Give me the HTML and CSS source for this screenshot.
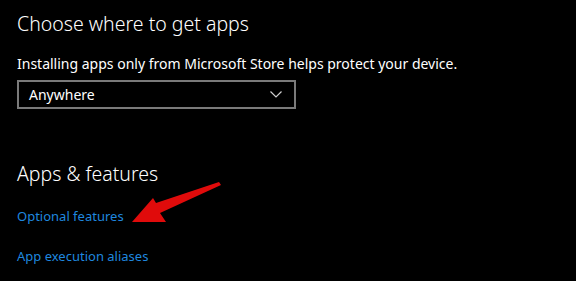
FILE: index.html
```html
<!DOCTYPE html>
<html lang="en">

<head>
    <meta charset="UTF-8">
    <title>Apps & features</title>
    <link rel="stylesheet" href="styles.css">
</head>

<body>

    <main class="settings">

        <h2 class="title">Choose where to get apps</h2>
        <p class="info">Installing apps only from Microsoft Store helps protect your device.</p>

        <div class="dropdown">
            <span>Anywhere</span>
            <svg class="chevron" width="12" height="7" viewBox="0 0 12 7">
                <path d="M0.5 0.5 L6 6 L11.5 0.5" fill="none" stroke="#cfcfcf" stroke-width="1.2" />
            </svg>
        </div>

        <h2 class="title second">Apps &amp; features</h2>
        <a class="link" href="#">Optional features</a>
        <a class="link" href="#">App execution aliases</a>

    </main>

    <svg class="arrow" width="576" height="281" viewBox="0 0 576 281">
        <path d="M219 182 L156 203 L153 198 L132 222 L166 222 L160 213 L221 185 Z" fill="#e00b0b" />
    </svg>

</body></html>
```

FILE: styles.css
```css
body {
    margin: 0;
    background-color: #000;
    color: #fff;
    font-family: "Noto Sans", "Open Sans", sans-serif;
    width: 576px;
    height: 281px;
    overflow: hidden;
    position: relative;
}

.settings {
    padding: 10px 17px 0 17px;
    display: flex;
    flex-direction: column;
    align-items: flex-start;
}

.title {
    margin: 0;
    font-weight: 300;
    font-size: 19.5px;
    line-height: 28px;
}

.info {
    margin: 16px 0 0 0;
    font-size: 14px;
    line-height: 20px;
}

.dropdown {
    margin-top: 6px;
    box-sizing: border-box;
    width: 279px;
    height: 29px;
    border: 2px solid #7a7a7a;
    display: flex;
    align-items: center;
    justify-content: space-between;
    padding: 0 12px 0 10px;
    font-size: 14px;
}

.second {
    margin-top: 51px;
}

.link {
    color: #1f87df;
    text-decoration: none;
    font-size: 13px;
    line-height: 20px;
    margin-top: 18px;
}

.link + .link {
    margin-top: 20px;
}

.arrow {
    position: absolute;
    left: 0;
    top: 0;
}
```
